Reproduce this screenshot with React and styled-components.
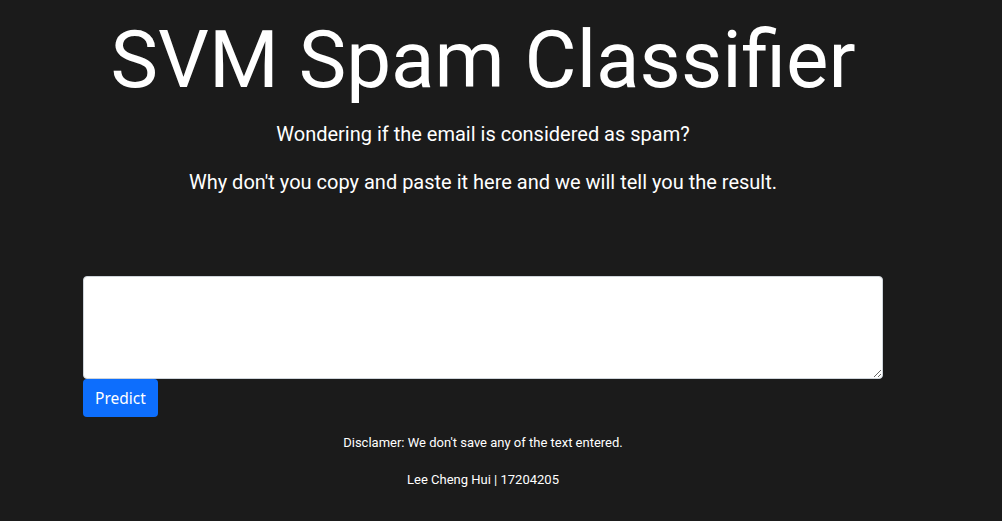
import styled, { createGlobalStyle } from "styled-components";

const Global = createGlobalStyle`
  html, body {
    margin: 0;
    background: #1b1b1b;
    color: #fff;
    font-family: Roboto, "Liberation Sans", sans-serif;
  }
`

const Page = styled.div`
  width: 800px;
  margin-left: 83px;
  display: flex;
  flex-direction: column;
  align-items: center;
`
const Title = styled.h1`
  font-size: 80px;
  font-weight: 400;
  line-height: 1.2;
  margin: 12px 0 14px;
`
const Lead = styled.p`
  font-size: 20px;
  margin: 0 0 ${p => p.gap}px;
  line-height: 1.2;
`
const Form = styled.form`
  align-self: stretch;
  display: flex;
  flex-direction: column;
  align-items: flex-start;
`
const Input = styled.textarea`
  box-sizing: border-box;
  width: 800px;
  height: 103px;
  border: 1px solid #ced4da;
  border-radius: 4px;
  background: #fff;
  margin: 0;
  display: block;
`
const Button = styled.button`
  background: #0d6efd;
  color: #fff;
  border: none;
  border-radius: 4px;
  font-family: "Noto Sans", "Open Sans", sans-serif;
  font-size: 15.5px;
  padding: 0 12px;
  height: 38px;
  cursor: pointer;
`
const Note = styled.p`
  font-size: 13px;
  margin: ${p => p.top}px 0 0;
  line-height: 1.2;
`

export default function App() {
  return (
    <>
      <Global />
      <Page>
        <Title>SVM Spam Classifier</Title>
        <Lead gap={24}>Wondering if the email is considered as spam?</Lead>
        <Lead gap={82}>Why don't you copy and paste it here and we will tell you the result.</Lead>
        <Form onSubmit={e => e.preventDefault()}>
          <Input />
          <Button type="submit">Predict</Button>
        </Form>
        <Note top={18}>Disclamer: We don't save any of the text entered.</Note>
        <Note top={21}>Lee Cheng Hui | 17204205</Note>
      </Page>
    </>
  )
}
